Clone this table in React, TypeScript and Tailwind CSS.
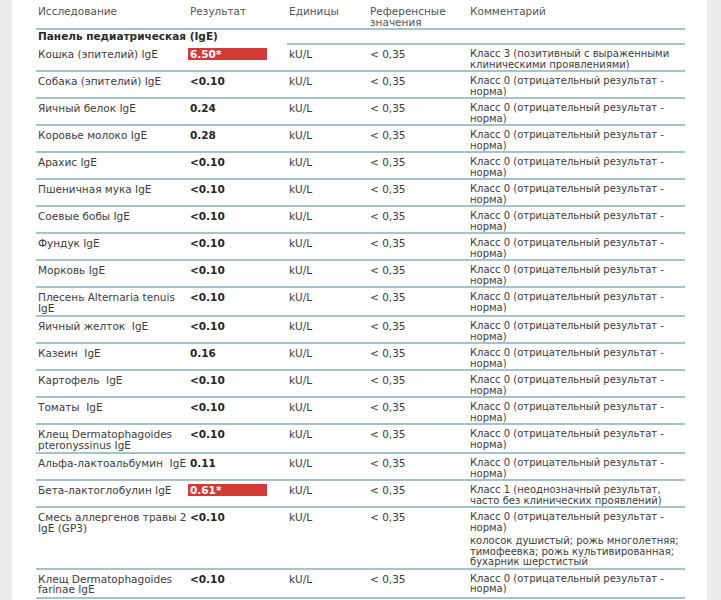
const font = "font-['DejaVu_Sans',Verdana,sans-serif]";

type Row = {
  name: string[];
  value: string;
  flag?: boolean;
  comment: string[];
  extra?: string[];
};

const neg = ["Класс 0 (отрицательный результат -", "норма)"];

const rows: Row[] = [
  { name: ["Кошка (эпителий) IgE"], value: "6.50*", flag: true, comment: ["Класс 3 (позитивный с выраженными", "клиническими проявлениями)"] },
  { name: ["Собака (эпителий) IgE"], value: "<0.10", comment: neg },
  { name: ["Яичный белок IgE"], value: "0.24", comment: neg },
  { name: ["Коровье молоко IgE"], value: "0.28", comment: neg },
  { name: ["Арахис IgE"], value: "<0.10", comment: neg },
  { name: ["Пшеничная мука IgE"], value: "<0.10", comment: neg },
  { name: ["Соевые бобы IgE"], value: "<0.10", comment: neg },
  { name: ["Фундук IgE"], value: "<0.10", comment: neg },
  { name: ["Морковь IgE"], value: "<0.10", comment: neg },
  { name: ["Плесень Alternaria tenuis", "IgE"], value: "<0.10", comment: neg },
  { name: ["Яичный желток  IgE"], value: "<0.10", comment: neg },
  { name: ["Казеин  IgE"], value: "0.16", comment: neg },
  { name: ["Картофель  IgE"], value: "<0.10", comment: neg },
  { name: ["Томаты  IgE"], value: "<0.10", comment: neg },
  { name: ["Клещ Dermatophagoides", "pteronyssinus IgE"], value: "<0.10", comment: neg },
  { name: ["Альфа-лактоальбумин  IgE"], value: "0.11", comment: neg },
  { name: ["Бета-лактоглобулин IgE"], value: "0.61*", flag: true, comment: ["Класс 1 (неоднозначный результат,", "часто без клинических проявлений)"] },
  {
    name: ["Смесь аллергенов травы 2", "IgE (GP3)"],
    value: "<0.10",
    comment: neg,
    extra: ["колосок душистый; рожь многолетняя;", "тимофеевка; рожь культивированная;", "бухарник шерстистый"],
  },
  { name: ["Клещ Dermatophagoides", "farinae IgE"], value: "<0.10", comment: neg },
];

const cols = "grid grid-cols-[152px_99px_81px_100px_217px]";
const cell = "pl-[2px] pt-[4px] border-b-2 border-[#a3c4cc] whitespace-pre";

function Lines({ items }: { items: string[] }) {
  return (
    <>
      {items.map((t, i) => (
        <div key={i}>{t}</div>
      ))}
    </>
  );
}

export default function App() {
  return (
    <div className={`w-[721px] h-[600px] overflow-hidden flex bg-white ${font}`}>
      <div className="w-[12px] bg-[#ececec]" />
      <div className="flex-1 pl-[24px] bg-white">
        <div className="w-[649px] text-[10.5px] leading-[10.5px] text-[#3d3d3d]">
          {/* header */}
          <div className={`${cols} text-[#555] leading-[11px]`}>
            <div className={`${cell} pt-[6px]`}>Исследование</div>
            <div className={`${cell} pt-[6px]`}>Результат</div>
            <div className={`${cell} pt-[6px]`}>Единицы</div>
            <div className={`${cell} pt-[6px]`}>
              <Lines items={["Референсные", "значения"]} />
            </div>
            <div className={`${cell} pt-[6px]`}>Комментарий</div>
          </div>

          {/* section */}
          <div className={cols}>
            <div className="col-span-2 pl-[2px] pt-[1px] pb-[3px] leading-[11px] font-bold text-[#2a2a2a] whitespace-pre">
              Панель педиатрическая (IgE)
            </div>
            <div className="col-span-3 border-b-2 border-[#a3c4cc]" />
          </div>

          {rows.map((r, i) => (
            <div key={i} className={cols}>
              <div className={`${cell} ${r.name.length > 1 ? "pb-[2px]" : ""}`}>
                <Lines items={r.name} />
              </div>
              <div className={cell}>
                {r.flag ? (
                  <div className="w-[79px] h-[12px] -mt-[1px] pt-[1px] -ml-[2px] pl-[2px] bg-[#d23a35] text-white font-bold">
                    {r.value}
                  </div>
                ) : (
                  <div className="font-bold text-[#262626]">{r.value}</div>
                )}
              </div>
              <div className={cell}>kU/L</div>
              <div className={cell}>{"< 0,35"}</div>
              <div className={`${cell} text-[10px]`}>
                <Lines items={r.comment} />
                {r.extra && (
                  <div className="mt-[3px]">
                    <Lines items={r.extra} />
                  </div>
                )}
              </div>
            </div>
          ))}
        </div>
      </div>
      <div className="w-[14px] bg-[#ececec]" />
    </div>
  );
}
